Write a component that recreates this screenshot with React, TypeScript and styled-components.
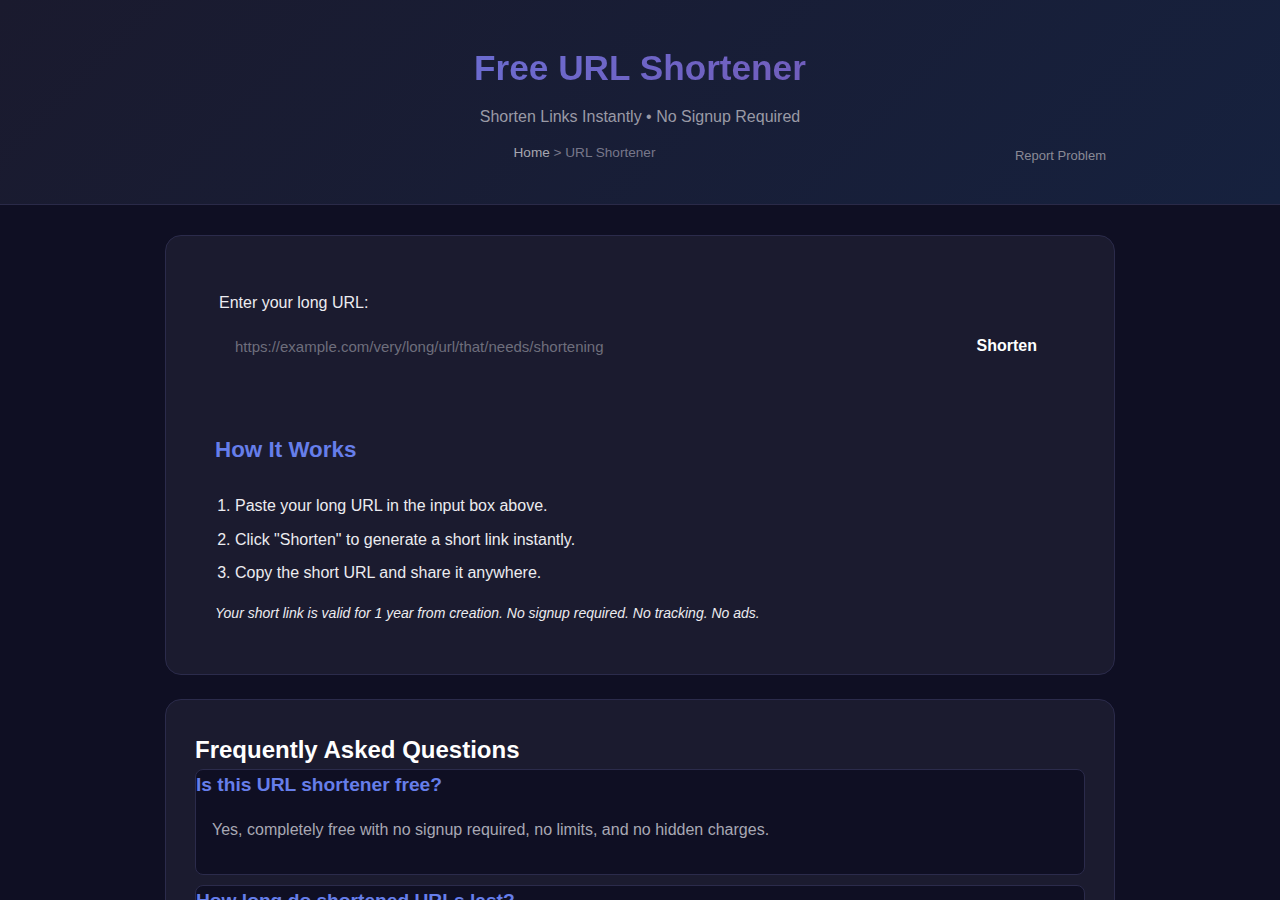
import React, { useState } from "react"
import styled, { createGlobalStyle } from "styled-components"

const GlobalStyle = createGlobalStyle`
	* {
		box-sizing: border-box;
	}

	body {
		margin: 0;
		background: #0f0f23;
		color: #e0e0e0;
		font-family: "Liberation Sans", Arial, sans-serif;
	}
`

const Header = styled.header`
	background: linear-gradient(135deg, #1a1a2e 0%, #16213e 100%);
	border-bottom: 1px solid #2a2a48;
	padding: 48px 20px 35px;
	text-align: center;
`

const Title = styled.h1`
	margin: 0;
	font-size: 35.2px;
	line-height: 40px;
	font-weight: 700;
	background: linear-gradient(135deg, #667eea 0%, #764ba2 100%);
	-webkit-background-clip: text;
	background-clip: text;
	color: transparent;
`

const Subtitle = styled.p`
	margin: 20px 0 0;
	font-size: 16px;
	line-height: 18px;
	color: #9a9aa6;
`

const HeaderRow = styled.div`
	max-width: 932px;
	margin: 16px auto 0;
	display: flex;
	align-items: center;
	gap: 20px;
`

const Breadcrumb = styled.nav`
	flex: 1;
	text-align: center;
	font-size: 13.6px;
	line-height: 15px;
	margin-bottom: 6px;
	color: #77778a;
`

const CrumbLink = styled.a`
	color: #a6a6b0;
	text-decoration: none;
`

const ReportButton = styled.button`
	background: none;
	border: none;
	padding: 6px 0;
	font-family: inherit;
	font-size: 13px;
	line-height: 15px;
	color: #8a8a96;
	cursor: pointer;
`

const Main = styled.main`
	max-width: 950px;
	margin: 0 auto;
	padding: 30px 0 40px;
	display: flex;
	flex-direction: column;
	gap: 24px;
`

const Card = styled.section`
	background: #1b1b2f;
	border: 1px solid #2b2b4b;
	border-radius: 16px;
	padding: 29px;
`

const Form = styled.form`
	padding: 29px 24px 24px;
`

const Label = styled.label`
	display: block;
	font-size: 16px;
	line-height: 18px;
	color: #ececf0;
	margin-bottom: 10px;
`

const InputRow = styled.div`
	display: flex;
	align-items: stretch;
`

const UrlInput = styled.input`
	flex: 1;
	min-width: 0;
	height: 48px;
	padding: 0 16px;
	background: transparent;
	border: none;
	outline: none;
	font-family: inherit;
	font-size: 15px;
	color: #e0e0e0;

	&::placeholder {
		color: #6e6e7c;
	}
`

const ShortenButton = styled.button`
	background: transparent;
	border: none;
	padding: 0 24px;
	font-family: inherit;
	font-size: 16px;
	font-weight: 700;
	color: #ffffff;
	cursor: pointer;
`

const HowSection = styled.div`
	margin-top: 24px;
	padding: 19px 20px 21px;
`

const SectionTitle = styled.h3`
	margin: 0 0 30px;
	font-size: 22.4px;
	line-height: 26px;
	color: #667eea;
`

const Steps = styled.ol`
	margin: 0;
	padding-left: 20px;
`

const Step = styled.li`
	font-size: 16px;
	line-height: 25.6px;
	margin-bottom: 8px;
	color: #ececf0;
`

const Note = styled.p`
	margin: 16px 0 0;
	font-size: 14px;
	line-height: 22.4px;
	font-style: italic;
	color: #ececf0;
`

const FaqTitle = styled.h2`
	margin: 7px 0 5px;
	font-size: 24px;
	line-height: 28px;
	color: #ffffff;
`

const FaqList = styled.div`
	display: flex;
	flex-direction: column;
	gap: 10px;
`

const FaqItem = styled.div`
	background: #0f0f23;
	border: 1px solid #2b2b4b;
	border-radius: 8px;
	overflow: hidden;
`

const Question = styled.button`
	display: block;
	width: 100%;
	text-align: left;
	background: none;
	border: none;
	padding: 4px 0 0;
	font-family: inherit;
	font-size: 19.2px;
	line-height: 22px;
	font-weight: 700;
	color: #667eea;
	cursor: pointer;
`

const Answer = styled.div<{ $open: boolean }>`
	display: ${p => (p.$open ? "block" : "none")};
	padding: 21px 16px 31px;
	font-size: 16px;
	line-height: 25.6px;
	color: #a8a8b4;
`

const faqs = [
	{
		q: "Is this URL shortener free?",
		a: "Yes, completely free with no signup required, no limits, and no hidden charges.",
	},
	{
		q: "How long do shortened URLs last?",
		a: "Every short link stays active for 1 year from the day it was created.",
	},
	{
		q: "Do you track clicks on my links?",
		a: "No. We don't track clicks, collect personal data or show ads.",
	},
]

const App = () => {
	const [url, setUrl] = useState("")
	const [open, setOpen] = useState<boolean[]>(faqs.map(() => true))

	const toggle = (i: number) =>
		setOpen(prev => prev.map((v, j) => (j === i ? !v : v)))

	return (
		<>
			<GlobalStyle />
			<Header>
				<Title>Free URL Shortener</Title>
				<Subtitle>Shorten Links Instantly • No Signup Required</Subtitle>
				<HeaderRow>
					<Breadcrumb>
						<CrumbLink href="#">Home</CrumbLink> &gt; URL Shortener
					</Breadcrumb>
					<ReportButton type="button">Report Problem</ReportButton>
				</HeaderRow>
			</Header>
			<Main>
				<Card>
					<Form onSubmit={e => e.preventDefault()}>
						<Label htmlFor="long-url">Enter your long URL:</Label>
						<InputRow>
							<UrlInput
								id="long-url"
								type="url"
								value={url}
								onChange={e => setUrl(e.target.value)}
								placeholder="https://example.com/very/long/url/that/needs/shortening"
							/>
							<ShortenButton type="submit">Shorten</ShortenButton>
						</InputRow>
					</Form>
					<HowSection>
						<SectionTitle>How It Works</SectionTitle>
						<Steps>
							<Step>Paste your long URL in the input box above.</Step>
							<Step>Click "Shorten" to generate a short link instantly.</Step>
							<Step>Copy the short URL and share it anywhere.</Step>
						</Steps>
						<Note>
							Your short link is valid for 1 year from creation. No signup
							required. No tracking. No ads.
						</Note>
					</HowSection>
				</Card>
				<Card>
					<FaqTitle>Frequently Asked Questions</FaqTitle>
					<FaqList>
						{faqs.map((f, i) => (
							<FaqItem key={f.q}>
								<Question type="button" onClick={() => toggle(i)}>
									{f.q}
								</Question>
								<Answer $open={open[i]}>{f.a}</Answer>
							</FaqItem>
						))}
					</FaqList>
				</Card>
			</Main>
		</>
	)
}

export default App
